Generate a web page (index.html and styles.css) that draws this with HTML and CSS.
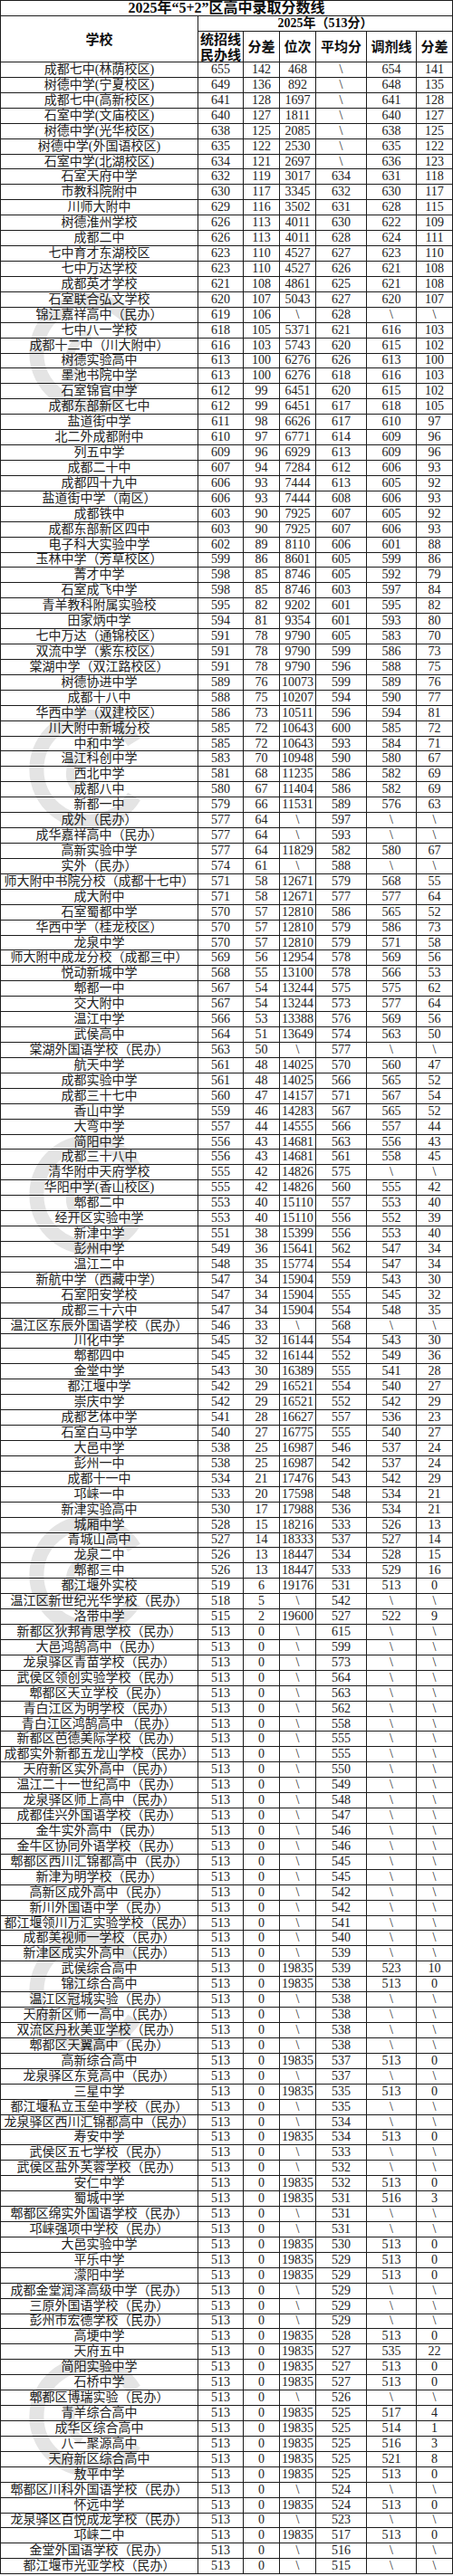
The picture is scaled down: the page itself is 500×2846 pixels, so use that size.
FILE: index.html
```html
<!DOCTYPE html>
<html lang="zh-CN">
<head>
<meta charset="utf-8">
<title>2025年“5+2”区高中录取分数线</title>
<link rel="stylesheet" href="styles.css">
</head>
<body>
<div class="sheet">
<table class="score">
<thead>
<tr><th class="h-title">2025年“5+2”区高中录取分数线</th></tr>
<tr><th class="h-school">学校</th><th class="h-year">2025年（513分）</th></tr>
<tr class="r-sub"><th><span>统招线<br>民办线</span></th><th>分差</th><th>位次</th><th>平均分</th><th>调剂线</th><th>分差</th></tr>
</thead>
<tbody>
<tr><td>成都七中(林荫校区)<td>655<td>142<td>468<td>&#92;<td>654<td>141
<tr><td>树德中学(宁夏校区)<td>649<td>136<td>892<td>&#92;<td>648<td>135
<tr><td>成都七中(高新校区)<td>641<td>128<td>1697<td>&#92;<td>641<td>128
<tr><td>石室中学(文庙校区)<td>640<td>127<td>1811<td>&#92;<td>640<td>127
<tr><td>树德中学(光华校区)<td>638<td>125<td>2085<td>&#92;<td>638<td>125
<tr><td>树德中学(外国语校区)<td>635<td>122<td>2530<td>&#92;<td>635<td>122
<tr><td>石室中学(北湖校区)<td>634<td>121<td>2697<td>&#92;<td>636<td>123
<tr><td>石室天府中学<td>632<td>119<td>3017<td>634<td>631<td>118
<tr><td>市教科院附中<td>630<td>117<td>3345<td>632<td>630<td>117
<tr><td>川师大附中<td>629<td>116<td>3502<td>631<td>628<td>115
<tr><td>树德淮州学校<td>626<td>113<td>4011<td>630<td>622<td>109
<tr><td>成都二中<td>626<td>113<td>4011<td>628<td>624<td>111
<tr><td>七中育才东湖校区<td>623<td>110<td>4527<td>627<td>623<td>110
<tr><td>七中万达学校<td>623<td>110<td>4527<td>626<td>621<td>108
<tr><td>成都英才学校<td>621<td>108<td>4861<td>625<td>621<td>108
<tr><td>石室联合弘文学校<td>620<td>107<td>5043<td>627<td>620<td>107
<tr><td>锦江嘉祥高中（民办）<td>619<td>106<td>&#92;<td>628<td>&#92;<td>&#92;
<tr><td>七中八一学校<td>618<td>105<td>5371<td>621<td>616<td>103
<tr><td>成都十二中（川大附中）<td>616<td>103<td>5743<td>620<td>615<td>102
<tr><td>树德实验高中<td>613<td>100<td>6276<td>626<td>613<td>100
<tr><td>墨池书院中学<td>613<td>100<td>6276<td>618<td>616<td>103
<tr><td>石室锦官中学<td>612<td>99<td>6451<td>620<td>615<td>102
<tr><td>成都东部新区七中<td>612<td>99<td>6451<td>617<td>618<td>105
<tr><td>盐道街中学<td>611<td>98<td>6626<td>617<td>610<td>97
<tr><td>北二外成都附中<td>610<td>97<td>6771<td>614<td>609<td>96
<tr><td>列五中学<td>609<td>96<td>6929<td>613<td>609<td>96
<tr><td>成都二十中<td>607<td>94<td>7284<td>612<td>606<td>93
<tr><td>成都四十九中<td>606<td>93<td>7444<td>613<td>605<td>92
<tr><td>盐道街中学（南区）<td>606<td>93<td>7444<td>608<td>606<td>93
<tr><td>成都铁中<td>603<td>90<td>7925<td>607<td>605<td>92
<tr><td>成都东部新区四中<td>603<td>90<td>7925<td>607<td>606<td>93
<tr><td>电子科大实验中学<td>602<td>89<td>8110<td>606<td>601<td>88
<tr><td>玉林中学（芳草校区）<td>599<td>86<td>8601<td>605<td>599<td>86
<tr><td>菁才中学<td>598<td>85<td>8746<td>605<td>592<td>79
<tr><td>石室成飞中学<td>598<td>85<td>8746<td>603<td>597<td>84
<tr><td>青羊教科附属实验校<td>595<td>82<td>9202<td>601<td>595<td>82
<tr><td>田家炳中学<td>594<td>81<td>9354<td>601<td>593<td>80
<tr><td>七中万达（通锦校区）<td>591<td>78<td>9790<td>605<td>583<td>70
<tr><td>双流中学（紫东校区）<td>591<td>78<td>9790<td>599<td>586<td>73
<tr><td>棠湖中学（双江路校区）<td>591<td>78<td>9790<td>596<td>588<td>75
<tr><td>树德协进中学<td>589<td>76<td>10073<td>599<td>589<td>76
<tr><td>成都十八中<td>588<td>75<td>10207<td>594<td>590<td>77
<tr><td>华西中学（双建校区）<td>586<td>73<td>10511<td>596<td>594<td>81
<tr><td>川大附中新城分校<td>585<td>72<td>10643<td>600<td>585<td>72
<tr><td>中和中学<td>585<td>72<td>10643<td>593<td>584<td>71
<tr><td>温江科创中学<td>583<td>70<td>10948<td>590<td>580<td>67
<tr><td>西北中学<td>581<td>68<td>11235<td>586<td>582<td>69
<tr><td>成都八中<td>580<td>67<td>11404<td>586<td>582<td>69
<tr><td>新都一中<td>579<td>66<td>11531<td>589<td>576<td>63
<tr><td>成外（民办）<td>577<td>64<td>&#92;<td>597<td>&#92;<td>&#92;
<tr><td>成华嘉祥高中（民办）<td>577<td>64<td>&#92;<td>593<td>&#92;<td>&#92;
<tr><td>高新实验中学<td>577<td>64<td>11829<td>582<td>580<td>67
<tr><td>实外（民办）<td>574<td>61<td>&#92;<td>588<td>&#92;<td>&#92;
<tr><td>师大附中书院分校（成都十七中）<td>571<td>58<td>12671<td>579<td>568<td>55
<tr><td>成大附中<td>571<td>58<td>12671<td>577<td>577<td>64
<tr><td>石室蜀都中学<td>570<td>57<td>12810<td>586<td>565<td>52
<tr><td>华西中学（桂龙校区）<td>570<td>57<td>12810<td>579<td>586<td>73
<tr><td>龙泉中学<td>570<td>57<td>12810<td>579<td>571<td>58
<tr><td>师大附中成龙分校（成都三中）<td>569<td>56<td>12954<td>578<td>569<td>56
<tr><td>悦动新城中学<td>568<td>55<td>13100<td>578<td>566<td>53
<tr><td>郫都一中<td>567<td>54<td>13244<td>575<td>575<td>62
<tr><td>交大附中<td>567<td>54<td>13244<td>573<td>577<td>64
<tr><td>温江中学<td>566<td>53<td>13388<td>576<td>569<td>56
<tr><td>武侯高中<td>564<td>51<td>13649<td>574<td>563<td>50
<tr><td>棠湖外国语学校（民办）<td>563<td>50<td>&#92;<td>577<td>&#92;<td>&#92;
<tr><td>航天中学<td>561<td>48<td>14025<td>570<td>560<td>47
<tr><td>成都实验中学<td>561<td>48<td>14025<td>566<td>565<td>52
<tr><td>成都三十七中<td>560<td>47<td>14157<td>571<td>567<td>54
<tr><td>香山中学<td>559<td>46<td>14283<td>567<td>565<td>52
<tr><td>大弯中学<td>557<td>44<td>14555<td>566<td>557<td>44
<tr><td>简阳中学<td>556<td>43<td>14681<td>563<td>556<td>43
<tr><td>成都三十八中<td>556<td>43<td>14681<td>561<td>558<td>45
<tr><td>清华附中天府学校<td>555<td>42<td>14826<td>575<td>&#92;<td>&#92;
<tr><td>华阳中学(香山校区)<td>555<td>42<td>14826<td>560<td>555<td>42
<tr><td>郫都二中<td>553<td>40<td>15110<td>557<td>553<td>40
<tr><td>经开区实验中学<td>553<td>40<td>15110<td>556<td>552<td>39
<tr><td>新津中学<td>551<td>38<td>15399<td>556<td>553<td>40
<tr><td>彭州中学<td>549<td>36<td>15641<td>562<td>547<td>34
<tr><td>温江二中<td>548<td>35<td>15774<td>554<td>547<td>34
<tr><td>新航中学（西藏中学）<td>547<td>34<td>15904<td>559<td>543<td>30
<tr><td>石室阳安学校<td>547<td>34<td>15904<td>555<td>545<td>32
<tr><td>成都三十六中<td>547<td>34<td>15904<td>554<td>548<td>35
<tr><td>温江区东辰外国语学校（民办）<td>546<td>33<td>&#92;<td>568<td>&#92;<td>&#92;
<tr><td>川化中学<td>545<td>32<td>16144<td>554<td>543<td>30
<tr><td>郫都四中<td>545<td>32<td>16144<td>552<td>549<td>36
<tr><td>金堂中学<td>543<td>30<td>16389<td>555<td>541<td>28
<tr><td>都江堰中学<td>542<td>29<td>16521<td>554<td>540<td>27
<tr><td>崇庆中学<td>542<td>29<td>16521<td>552<td>542<td>29
<tr><td>成都艺体中学<td>541<td>28<td>16627<td>557<td>536<td>23
<tr><td>石室白马中学<td>540<td>27<td>16775<td>555<td>540<td>27
<tr><td>大邑中学<td>538<td>25<td>16987<td>546<td>537<td>24
<tr><td>彭州一中<td>538<td>25<td>16987<td>542<td>537<td>24
<tr><td>成都十一中<td>534<td>21<td>17476<td>543<td>542<td>29
<tr><td>邛崃一中<td>533<td>20<td>17598<td>548<td>534<td>21
<tr><td>新津实验高中<td>530<td>17<td>17988<td>536<td>534<td>21
<tr><td>城厢中学<td>528<td>15<td>18216<td>533<td>526<td>13
<tr><td>青城山高中<td>527<td>14<td>18333<td>537<td>527<td>14
<tr><td>龙泉二中<td>526<td>13<td>18447<td>534<td>528<td>15
<tr><td>郫都三中<td>526<td>13<td>18447<td>533<td>529<td>16
<tr><td>都江堰外实校<td>519<td>6<td>19176<td>531<td>513<td>0
<tr><td>温江区新世纪光华学校（民办）<td>518<td>5<td>&#92;<td>542<td>&#92;<td>&#92;
<tr><td>洛带中学<td>515<td>2<td>19600<td>527<td>522<td>9
<tr><td>新都区狄邦肯思学校（民办）<td>513<td>0<td>&#92;<td>615<td>&#92;<td>&#92;
<tr><td>大邑鸿鹄高中（民办）<td>513<td>0<td>&#92;<td>599<td>&#92;<td>&#92;
<tr><td>龙泉驿区青苗学校（民办）<td>513<td>0<td>&#92;<td>573<td>&#92;<td>&#92;
<tr><td>武侯区领创实验学校（民办）<td>513<td>0<td>&#92;<td>564<td>&#92;<td>&#92;
<tr><td>郫都区天立学校（民办）<td>513<td>0<td>&#92;<td>563<td>&#92;<td>&#92;
<tr><td>青白江区为明学校（民办）<td>513<td>0<td>&#92;<td>562<td>&#92;<td>&#92;
<tr><td>青白江区鸿鹄高中 （民办）<td>513<td>0<td>&#92;<td>558<td>&#92;<td>&#92;
<tr><td>新都区芭德美际学校（民办）<td>513<td>0<td>&#92;<td>555<td>&#92;<td>&#92;
<tr><td>成都实外新都五龙山学校（民办）<td>513<td>0<td>&#92;<td>555<td>&#92;<td>&#92;
<tr><td>天府新区实外高中（民办）<td>513<td>0<td>&#92;<td>550<td>&#92;<td>&#92;
<tr><td>温江二十一世纪高中（民办）<td>513<td>0<td>&#92;<td>549<td>&#92;<td>&#92;
<tr><td>龙泉驿区师上高中（民办）<td>513<td>0<td>&#92;<td>548<td>&#92;<td>&#92;
<tr><td>成都佳兴外国语学校（民办）<td>513<td>0<td>&#92;<td>547<td>&#92;<td>&#92;
<tr><td>金牛实外高中（民办）<td>513<td>0<td>&#92;<td>546<td>&#92;<td>&#92;
<tr><td>金牛区协同外语学校（民办）<td>513<td>0<td>&#92;<td>546<td>&#92;<td>&#92;
<tr><td>郫都区西川汇锦都高中（民办）<td>513<td>0<td>&#92;<td>545<td>&#92;<td>&#92;
<tr><td>新津为明学校（民办）<td>513<td>0<td>&#92;<td>545<td>&#92;<td>&#92;
<tr><td>高新区成外高中（民办）<td>513<td>0<td>&#92;<td>542<td>&#92;<td>&#92;
<tr><td>新川外国语中学（民办）<td>513<td>0<td>&#92;<td>542<td>&#92;<td>&#92;
<tr><td>都江堰领川万汇实验学校（民办）<td>513<td>0<td>&#92;<td>541<td>&#92;<td>&#92;
<tr><td>成都美视师一学校（民办）<td>513<td>0<td>&#92;<td>540<td>&#92;<td>&#92;
<tr><td>新津区成实外高中（民办）<td>513<td>0<td>&#92;<td>539<td>&#92;<td>&#92;
<tr><td>武侯综合高中<td>513<td>0<td>19835<td>539<td>523<td>10
<tr><td>锦江综合高中<td>513<td>0<td>19835<td>538<td>513<td>0
<tr><td>温江区冠城实验（民办）<td>513<td>0<td>&#92;<td>538<td>&#92;<td>&#92;
<tr><td>天府新区师一高中（民办）<td>513<td>0<td>&#92;<td>538<td>&#92;<td>&#92;
<tr><td>双流区丹秋美亚学校（民办）<td>513<td>0<td>&#92;<td>538<td>&#92;<td>&#92;
<tr><td>郫都区天翼高中（民办）<td>513<td>0<td>&#92;<td>538<td>&#92;<td>&#92;
<tr><td>高新综合高中<td>513<td>0<td>19835<td>537<td>513<td>0
<tr><td>龙泉驿区东竞高中（民办）<td>513<td>0<td>&#92;<td>537<td>&#92;<td>&#92;
<tr><td>三星中学<td>513<td>0<td>19835<td>535<td>513<td>0
<tr><td>都江堰私立玉垒中学校（民办）<td>513<td>0<td>&#92;<td>535<td>&#92;<td>&#92;
<tr><td>龙泉驿区西川汇锦都高中（民办）<td>513<td>0<td>&#92;<td>534<td>&#92;<td>&#92;
<tr><td>寿安中学<td>513<td>0<td>19835<td>534<td>513<td>0
<tr><td>武侯区五七学校（民办）<td>513<td>0<td>&#92;<td>533<td>&#92;<td>&#92;
<tr><td>武侯区盐外芙蓉学校（民办）<td>513<td>0<td>&#92;<td>532<td>&#92;<td>&#92;
<tr><td>安仁中学<td>513<td>0<td>19835<td>532<td>513<td>0
<tr><td>蜀城中学<td>513<td>0<td>19835<td>531<td>516<td>3
<tr><td>郫都区绵实外国语学校（民办）<td>513<td>0<td>&#92;<td>531<td>&#92;<td>&#92;
<tr><td>邛崃强项中学校（民办）<td>513<td>0<td>&#92;<td>531<td>&#92;<td>&#92;
<tr><td>大邑实验中学<td>513<td>0<td>19835<td>530<td>513<td>0
<tr><td>平乐中学<td>513<td>0<td>19835<td>529<td>513<td>0
<tr><td>濛阳中学<td>513<td>0<td>19835<td>529<td>513<td>0
<tr><td>成都金堂润泽高级中学（民办）<td>513<td>0<td>&#92;<td>529<td>&#92;<td>&#92;
<tr><td>三原外国语学校（民办）<td>513<td>0<td>&#92;<td>529<td>&#92;<td>&#92;
<tr><td>彭州市宏德学校（民办）<td>513<td>0<td>&#92;<td>529<td>&#92;<td>&#92;
<tr><td>高埂中学<td>513<td>0<td>19835<td>528<td>513<td>0
<tr><td>天府五中<td>513<td>0<td>19835<td>527<td>535<td>22
<tr><td>简阳实验中学<td>513<td>0<td>19835<td>527<td>513<td>0
<tr><td>石桥中学<td>513<td>0<td>19835<td>527<td>513<td>0
<tr><td>郫都区博瑞实验（民办）<td>513<td>0<td>&#92;<td>526<td>&#92;<td>&#92;
<tr><td>青羊综合高中<td>513<td>0<td>19835<td>525<td>517<td>4
<tr><td>成华区综合高中<td>513<td>0<td>19835<td>525<td>514<td>1
<tr><td>八一聚源高中<td>513<td>0<td>19835<td>525<td>516<td>3
<tr><td>天府新区综合高中<td>513<td>0<td>19835<td>525<td>521<td>8
<tr><td>敖平中学<td>513<td>0<td>19835<td>525<td>513<td>0
<tr><td>郫都区川科外国语学校（民办）<td>513<td>0<td>&#92;<td>524<td>&#92;<td>&#92;
<tr><td>怀远中学<td>513<td>0<td>19835<td>524<td>513<td>0
<tr><td>龙泉驿区百悦成龙学校（民办）<td>513<td>0<td>&#92;<td>523<td>&#92;<td>&#92;
<tr><td>邛崃二中<td>513<td>0<td>19835<td>517<td>513<td>0
<tr><td>金堂外国语学校（民办）<td>513<td>0<td>&#92;<td>516<td>&#92;<td>&#92;
<tr><td>都江堰市光亚学校（民办）<td>513<td>0<td>&#92;<td>515<td>&#92;<td>&#92;
</tbody>
</table>
<div class="watermarks" aria-hidden="true">
<svg class="wm wm-1" viewBox="0 0 140 140" width="140" height="140"><path d="M118 40 A58 58 0 1 0 118 100" fill="none" stroke="#000" stroke-width="16"/><path d="M60 96 C40 84 44 56 70 50" fill="none" stroke="#000" stroke-width="9"/></svg>
<svg class="wm wm-2" viewBox="0 0 140 140" width="140" height="140"><path d="M118 40 A58 58 0 1 0 118 100" fill="none" stroke="#000" stroke-width="16"/><path d="M60 96 C40 84 44 56 70 50" fill="none" stroke="#000" stroke-width="9"/></svg>
<svg class="wm wm-3" viewBox="0 0 140 140" width="140" height="140"><path d="M118 40 A58 58 0 1 0 118 100" fill="none" stroke="#000" stroke-width="16"/><path d="M60 96 C40 84 44 56 70 50" fill="none" stroke="#000" stroke-width="9"/></svg>
<svg class="wm wm-4" viewBox="0 0 140 140" width="140" height="140"><path d="M118 40 A58 58 0 1 0 118 100" fill="none" stroke="#000" stroke-width="16"/><path d="M60 96 C40 84 44 56 70 50" fill="none" stroke="#000" stroke-width="9"/></svg>
<svg class="wm wm-5" viewBox="0 0 140 140" width="140" height="140"><path d="M118 40 A58 58 0 1 0 118 100" fill="none" stroke="#000" stroke-width="16"/><path d="M60 96 C40 84 44 56 70 50" fill="none" stroke="#000" stroke-width="9"/></svg>
<svg class="wm wm-6" viewBox="0 0 140 140" width="140" height="140"><path d="M118 40 A58 58 0 1 0 118 100" fill="none" stroke="#000" stroke-width="16"/><path d="M60 96 C40 84 44 56 70 50" fill="none" stroke="#000" stroke-width="9"/></svg>
</div>
</div>
</body>
</html>
```

FILE: styles.css
```css
* { box-sizing: border-box; }
html, body { margin: 0; padding: 0; background: #fff; }

.sheet {
  position: relative;
  width: 500px;
}

.score {
  display: block;
  width: 500px;
  border-left: 1px solid #1c1c1c;
  border-top: 1px solid #1c1c1c;
  font-family: "Liberation Serif", "Noto Sans CJK SC", serif;
  color: #1a1a1a;
}
.score thead,
.score tbody {
  display: grid;
  grid-template-columns: 218px 50px 40px 40px 56px 55px 40px;
}
.score thead { grid-template-rows: 17px 17px 34px; }
.score tbody { grid-auto-rows: 16.93px; }
.score tr { display: contents; }

.score th,
.score td {
  display: flex;
  align-items: center;
  justify-content: center;
  min-width: 0;
  padding: 0;
  border-right: 1px solid #1c1c1c;
  border-bottom: 1px solid #1c1c1c;
  text-align: center;
  white-space: nowrap;
}

.score th {
  font-weight: 700;
  color: #0e0e0e;
}
.h-title {
  grid-column: 1 / -1;
  grid-row: 1;
  font-size: 16px;
  line-height: 16px;
}
.h-school {
  grid-column: 1;
  grid-row: 2 / 4;
  font-family: "Noto Sans CJK SC", sans-serif;
  font-size: 15px;
  line-height: 16px;
  padding-top: 3px;
}
.h-year {
  grid-column: 2 / -1;
  grid-row: 2;
  font-size: 14px;
  line-height: 16px;
}
.r-sub th {
  grid-row: 3;
  font-family: "Noto Sans CJK SC", sans-serif;
  font-size: 15px;
  line-height: 16.5px;
}

.score td {
  font-size: 14px;
  line-height: 16px;
  font-weight: 400;
  color: #202020;
}

/* faint site watermark lying over the sheet */
.watermarks {
  position: absolute;
  inset: 0;
  pointer-events: none;
}
.wm {
  position: absolute;
  left: 30px;
  opacity: 0.1;
}
.wm-1 { top: 320px; }
.wm-2 { top: 780px; }
.wm-3 { top: 1250px; }
.wm-4 { top: 1670px; }
.wm-5 { top: 2130px; }
.wm-6 { top: 2600px; }
```
